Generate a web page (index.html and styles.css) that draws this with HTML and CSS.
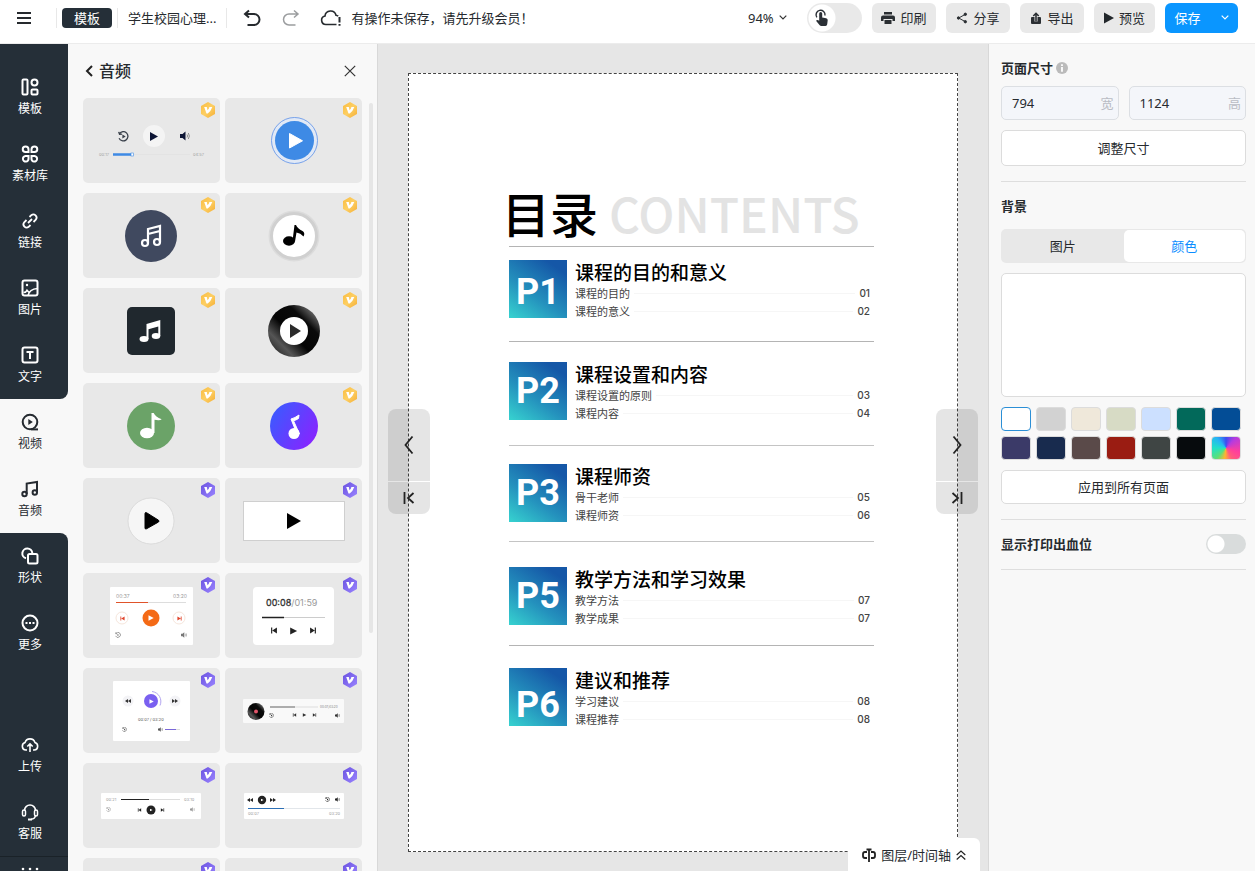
FILE: index.html
```
<!DOCTYPE html>
<html lang="zh-CN">
<head>
<meta charset="utf-8">
<meta name="viewport" content="width=device-width, initial-scale=1">
<title>学生校园心理</title>
<link rel="stylesheet" href="styles.css">
</head>
<body>
<svg class="defs" aria-hidden="true">
  <defs>
    <linearGradient id="gold" x1="0" y1="0" x2="1" y2="1"><stop offset="0" stop-color="#f9bb3f"/><stop offset=".5" stop-color="#fdcf63"/><stop offset="1" stop-color="#f5ae35"/></linearGradient>
    <linearGradient id="violet" x1="0" y1="0" x2="1" y2="1"><stop offset="0" stop-color="#6a52e0"/><stop offset="1" stop-color="#9a84ff"/></linearGradient>
    <linearGradient id="neon" x1="0" y1=".2" x2="1" y2=".8"><stop offset="0" stop-color="#3a5bff"/><stop offset="1" stop-color="#8b22ff"/></linearGradient>
    <linearGradient id="vinyl" x1="0" y1="1" x2="1" y2="0"><stop offset="0" stop-color="#111"/><stop offset=".25" stop-color="#555"/><stop offset=".45" stop-color="#050505"/><stop offset=".7" stop-color="#0a0a0a"/><stop offset=".85" stop-color="#5a5a5a"/><stop offset="1" stop-color="#111"/></linearGradient>
    <symbol id="hex" viewBox="0 0 14 16"><path d="M7 0 14 4V12L7 16 0 12V4Z"/><path d="M3.200 5H5.800L6.500 8.300Q8.200 6.800 8.400 5H11.300Q9.800 9.500 6.700 11.600H5.500Z" fill="#fff"/></symbol>
    <symbol id="prev" viewBox="0 0 6 6"><path d="M.5.5h1v5h-1zM5.500.5v5L1.500 3z"/></symbol>
    <symbol id="next" viewBox="0 0 6 6"><path d="M4.500.5h1v5h-1zM.5.5v5L4.500 3z"/></symbol>
    <symbol id="rew" viewBox="0 0 6 4"><path d="M3 0v4L0 2zM6 0v4L3 2z"/></symbol>
    <symbol id="fwd" viewBox="0 0 6 4"><path d="M0 0v4l3-2zM3 0v4l3-2z"/></symbol>
    <symbol id="tri" viewBox="0 0 6 6"><path d="M.5.3v5.400L5.700 3z"/></symbol>
    <symbol id="vol" viewBox="0 0 10 10"><path d="M0 3h2.500L5.500.5v9L2.500 7H0z"/><path d="M7 3.500q1.200 1.500 0 3M8.300 2q2.200 3 0 6" fill="none" stroke="currentColor" stroke-width=".8"/></symbol>
    <symbol id="loop" viewBox="0 0 10 10"><path d="M1.500 2.200A4.200 4.200 0 1 1 1 6.500M.6.8l.8 2.200 2.300-.2" fill="none" stroke="currentColor" stroke-width="1.200"/><path d="M4 3.200v3.600L7 5z"/></symbol>
  </defs>
</svg>

<div class="app">
  <header class="topbar">
    <button class="icon-btn menu" aria-label="菜单"><svg width="14" height="12" viewBox="0 0 14 12" stroke="#262a2e" stroke-width="2"><path d="M0 1h14M0 6h14M0 11h14"/></svg></button>
    <div class="doc-name"><span class="doc-kind">模板</span></div>
    <div class="doc-title">学生校园心理...</div>
    <button class="icon-btn" aria-label="撤销"><svg width="18" height="18" viewBox="0 0 18 18" fill="none" stroke="#262a2e" stroke-width="2"><path d="M6 1.500 2 5l4 3.500M2.300 5H11a5.500 5.500 0 0 1 0 11H4.500"/></svg></button>
    <button class="icon-btn redo" aria-label="重做"><svg width="18" height="18" viewBox="0 0 18 18" fill="none" stroke="#9b9d9f" stroke-width="1.500"><path d="M12 1.500 16 5l-4 3.500M15.700 5H7a5.500 5.500 0 0 0 0 11h6.500"/></svg></button>
    <div class="save-state"><svg width="22" height="18" viewBox="0 0 22 18" fill="none" stroke="#262a2e" stroke-width="1.600"><path d="M16.500 15.500H6a4.300 4.300 0 0 1-1-8.500A5.600 5.600 0 0 1 16 6.200a4 4 0 0 1 2.200 1"/><path d="M19.500 8v5.500M19.500 15v1.800" stroke-width="2"/></svg><span>有操作未保存，请先升级会员！</span></div>

    <div class="actions">
      <label class="zoom"><select aria-label="缩放"><option>94%</option></select><svg width="8" height="5" viewBox="0 0 8 5" fill="none" stroke="#333" stroke-width="1.200"><path d="M.7.7 4 4 7.300.7"/></svg></label>
      <label class="touch"><input type="checkbox" aria-label="触控模式"><svg width="16" height="18" viewBox="0 0 16 18"><path d="M2.800 8.300A4.500 4.500 0 1 1 11 6.500" fill="none" stroke="#2b3036" stroke-width="1.400"/><path d="M5.200 4.500a1.500 1.500 0 0 1 3 0v4l4 .8q1.600.4 1.500 2l-.5 4q-.2 1.700-1.700 1.700H7.300q-1 0-1.600-.8L2 11.800q1.300-1.400 3.200 0z" fill="#2b3036"/></svg></label>
      <button class="btn"><svg width="14" height="14" viewBox="0 0 14 14" fill="#2b2f33"><path d="M3 1h8v2.500H3z"/><path fill-rule="evenodd" d="M2 4.500h10q2 0 2 2V10h-2.500V8h-9v2H0V6.500q0-2 2-2z"/><path d="M3.500 9h7v4h-7z"/></svg>印刷</button>
      <button class="btn"><svg width="12" height="12" viewBox="0 0 12 12" fill="#2b2f33" stroke="#2b2f33"><path d="M9 2.500 2.700 6 9 9.500" fill="none"/><circle cx="9.300" cy="2.300" r="1.200"/><circle cx="2.500" cy="6" r="1.200"/><circle cx="9.300" cy="9.700" r="1.200"/></svg>分享</button>
      <button class="btn"><svg width="12" height="12" viewBox="0 0 12 12"><path d="M2 5h8q1 0 1 1v5q0 1-1 1H2q-1 0-1-1V6q0-1 1-1z" fill="#2b2f33"/><path d="M6 9.500V4" stroke="#e9e9e9" stroke-width="3"/><path d="M6 9.500V2M3.300 4 6 1.300 8.700 4" stroke="#2b2f33" stroke-width="1.600" fill="none"/></svg>导出</button>
      <button class="btn btn-play"><svg width="10" height="12" viewBox="0 0 10 12" fill="#22272b"><path d="M0 .5v11L10 6z"/></svg>预览</button>
      <button class="btn btn-save">保存<svg width="8" height="5" viewBox="0 0 8 5" fill="none" stroke="#fff" stroke-width="1.200"><path d="M.7.7 4 4 7.300.7"/></svg></button>
    </div>
  </header>

  <nav class="rail">
    <div class="rail-group rail-first">
      <button class="rail-item"><svg width="18" height="18" viewBox="0 0 18 18" class="ic"><rect x="1.500" y="1.500" width="5" height="15" rx="1"/><circle cx="13.500" cy="4.500" r="3"/><rect x="10.500" y="11.500" width="6" height="5" rx="1"/></svg>模板</button>
      <button class="rail-item"><svg width="18" height="18" viewBox="0 0 18 18" class="ic"><path d="M4.500 1.500h0a3 3 0 0 1 3 3v2.500h-3a2.700 2.700 0 0 1 0-5.500zM13.500 1.500a2.700 2.700 0 0 1 0 5.500h-3V4.500a3 3 0 0 1 3-3zM4.500 11h3v2.500a2.800 2.800 0 1 1-3-2.500zM10.500 11h3a2.800 2.800 0 1 1-3 2.500z"/></svg>素材库</button>
      <button class="rail-item"><svg width="18" height="18" viewBox="0 0 18 18" class="ic"><path d="M7 11l4-4M8.500 5l1.800-1.800a3.200 3.200 0 0 1 4.500 4.500L12.500 10M9.500 13l-1.800 1.800a3.200 3.200 0 0 1-4.500-4.500L5.500 8" stroke-width="1.800"/></svg>链接</button>
      <button class="rail-item"><svg width="18" height="18" viewBox="0 0 18 18" class="ic"><rect x="1.500" y="1.500" width="15" height="15" rx="2"/><circle cx="6" cy="6" r="1.200" fill="currentColor" stroke="none"/><path d="M2.500 13.500q2.500 0 3.500-2.200L8.500 14M7 16.500q1.500-6.500 9.500-7" stroke-width="1.600"/></svg>图片</button>
      <button class="rail-item"><svg width="18" height="18" viewBox="0 0 18 18" class="ic"><rect x="1.500" y="1.500" width="15" height="15" rx="2"/><path d="M5.500 6h7M9 6v7"/></svg>文字</button>
    </div>
    <div class="rail-group rail-active">
      <button class="rail-item"><svg width="18" height="18" viewBox="0 0 18 18" class="ic"><circle cx="9" cy="9" r="7.300"/><path d="M10 16.400h7"/><path d="M7.300 6v6l4.500-3z" fill="currentColor" stroke="none"/></svg>视频</button>
      <button class="rail-item"><svg width="18" height="18" viewBox="0 0 18 18" class="ic"><circle cx="3.500" cy="14" r="2.200"/><circle cx="13.800" cy="12.500" r="2.200"/><path d="M5.700 14V3.500L16 2v10.500"/></svg>音频</button>
    </div>
    <div class="rail-group rail-last">
      <button class="rail-item"><svg width="18" height="18" viewBox="0 0 18 18" class="ic"><path d="M5 11.300a5 5 0 1 1 6.300-5.300"/><rect x="7" y="7" width="9.500" height="9.500" rx="1.500"/></svg>形状</button>
      <button class="rail-item"><svg width="18" height="18" viewBox="0 0 18 18" class="ic"><circle cx="9" cy="9" r="7.500"/><path d="M4.500 9h2M8 9h2M11.500 9h2"/></svg>更多</button>
      <div class="rail-foot">
        <button class="rail-item"><svg width="18" height="18" viewBox="0 0 18 18" class="ic"><path d="M6 14H4.700a3.800 3.800 0 0 1-.7-7.400 5.200 5.200 0 0 1 10 0 3.800 3.800 0 0 1-.7 7.400H12M9 16V8M6.300 10.500 9 7.800l2.700 2.700" stroke-width="1.600"/></svg>上传</button>
        <button class="rail-item"><svg width="18" height="18" viewBox="0 0 18 18" class="ic"><path d="M3.500 7.500a5.500 5.500 0 0 1 11 0M14.500 12.500q-.5 3.500-4.500 3.800" stroke-width="1.600"/><rect x="1.500" y="7" width="3" height="6" rx="1.500" stroke-width="1.500"/><rect x="13.500" y="7" width="3" height="6" rx="1.500" stroke-width="1.500"/><path d="M7 16.500h4"/></svg>客服</button>
        <button class="rail-dots" aria-label="展开"><svg width="18" height="4" viewBox="0 0 18 4" fill="#fff"><circle cx="2" cy="2" r="1.300"/><circle cx="9" cy="2" r="1.300"/><circle cx="16" cy="2" r="1.300"/></svg></button>
      </div>
    </div>
  </nav>

  <aside class="library">
    <div class="library-head">
      <button class="back"><svg width="8" height="12" viewBox="0 0 8 12" fill="none" stroke="#222" stroke-width="2"><path d="M7 1 2 6l5 5"/></svg>音频</button>
      <button class="icon-btn" aria-label="关闭"><svg width="12" height="12" viewBox="0 0 12 12" stroke="#333" stroke-width="1.200"><path d="M.8.8l10.400 10.400M11.200.8.8 11.200"/></svg></button>
    </div>
    <div class="library-body">
      <div class="cards">
        <button class="card gold"><svg viewBox="0 0 137 85"><g color="#39404a" fill="#39404a"><use href="#loop" x="35" y="33" width="11" height="11"/></g><circle cx="71" cy="38" r="11" fill="#f4f4f4"/><path d="M67 34v9l8-4.500z" fill="#0c1534"/><g color="#777" fill="#0c1534"><use href="#vol" x="97" y="33" width="10" height="10"/></g><text x="16" y="58" font-size="4" fill="#a0a0a0">00:17</text><path d="M50 56.500h57" stroke="#e3e3e3"/><path d="M30 56.500h19" stroke="#3e8ae5" stroke-width="2.500"/><rect x="48" y="55" width="2.500" height="3" fill="#fff" stroke="#3e8ae5" stroke-width=".6"/><text x="110" y="58" font-size="4" fill="#a0a0a0">04:57</text></svg><svg class="badge"><use href="#hex"/></svg></button>
        <button class="card gold"><svg viewBox="0 0 137 85"><circle cx="69.500" cy="42.500" r="23" fill="#e1e9f6" stroke="#5b8fe8" stroke-width=".8"/><circle cx="69.500" cy="42.500" r="19.500" fill="#3e8ae5"/><path d="M64.500 35.500v14.500l13-7.200z" fill="#fff" stroke="#fff" stroke-linejoin="round"/></svg><svg class="badge"><use href="#hex"/></svg></button>
        <button class="card gold"><svg viewBox="0 0 137 85"><circle cx="68" cy="43" r="26" fill="#40495f"/><g fill="none" stroke="#fff" stroke-width="2.200"><circle cx="62" cy="50" r="3"/><circle cx="74" cy="49" r="3"/><path d="M65 50V36l12-3v16M65 41l12-3"/></g></svg><svg class="badge"><use href="#hex"/></svg></button>
        <button class="card gold"><svg viewBox="0 0 137 85"><circle cx="69" cy="43" r="25.500" fill="#dcdcdc"/><circle cx="69" cy="43" r="22.500" fill="#fff" stroke="#d0d0d0" stroke-width="3"/><ellipse cx="64" cy="48" rx="6" ry="4.700"/><path d="M67.500 48 69.500 32h1.500q1.500 3.500 6.500 6 3 2 1 5.500-3-3.500-7-4l-1.500 9z"/></svg><svg class="badge"><use href="#hex"/></svg></button>
        <button class="card gold"><svg viewBox="0 0 137 85"><rect x="44" y="19" width="48" height="48" rx="5" fill="#20282e"/><g fill="#fff"><ellipse cx="61" cy="51" rx="4.500" ry="3"/><ellipse cx="73" cy="48" rx="4.300" ry="3"/><path d="M63.500 51V36L77.300 32v16h-2V38.500l-9.800 2.700V51z"/></g></svg><svg class="badge"><use href="#hex"/></svg></button>
        <button class="card gold"><svg viewBox="0 0 137 85"><circle cx="69" cy="43" r="26" fill="url(#vinyl)"/><circle cx="69" cy="43" r="14" fill="#fff"/><path d="M65 36v14l11-7z" fill="#2b2b2b"/></svg><svg class="badge"><use href="#hex"/></svg></button>
        <button class="card gold"><svg viewBox="0 0 137 85"><circle cx="68" cy="43" r="24" fill="#6ba368"/><ellipse cx="64" cy="50" rx="7" ry="5.300" fill="#fff"/><path d="M68.500 50V30h2.200q1.500 3.800 8 6.300-2 1.500-7.200.4V50z" fill="#fff"/></svg><svg class="badge"><use href="#hex"/></svg></button>
        <button class="card gold"><svg viewBox="0 0 137 85"><circle cx="69" cy="43" r="24" fill="url(#neon)"/><circle cx="69" cy="50.500" r="5.500" fill="#fff"/><path d="M66 36q4-1 8-4l-.5 3.500q-3 2-5 2.200l6 13.300h-2.500z" fill="#fff" stroke="#fff"/></svg><svg class="badge"><use href="#hex"/></svg></button>
        <button class="card violet"><svg viewBox="0 0 137 85"><circle cx="68" cy="43" r="23" fill="#f6f6f6" stroke="#d6d6d6" stroke-width=".8"/><path d="M62 35.500v14.500q0 1.500 1.500.8L75.500 44q1-1 0-1.800L63.500 34.700q-1.500-.5-1.500.8z" stroke="#000"/></svg><svg class="badge"><use href="#hex"/></svg></button>
        <button class="card violet"><svg viewBox="0 0 137 85"><rect x="18.500" y="23.500" width="101" height="39" fill="#fff" stroke="#cfcfcf"/><path d="M62 35v16l14-8z"/></svg><svg class="badge"><use href="#hex"/></svg></button>
        <button class="card violet"><svg viewBox="0 0 137 85"><rect x="27" y="14" width="83" height="58" rx="1" fill="#fff"/><text x="33" y="25" font-size="5" fill="#999">00:37</text><text x="90" y="25" font-size="5" fill="#999">03:20</text><path d="M33 29.500h70" stroke="#ddd"/><path d="M33 29.500h32" stroke="#e0532a"/><circle cx="39" cy="45" r="6" fill="#fff" stroke="#f6e6dc"/><circle cx="68" cy="45" r="8.500" fill="#f46a16"/><circle cx="96" cy="45" r="6" fill="#fff" stroke="#f6e6dc"/><g fill="#e0432a"><use href="#prev" x="37" y="43" width="5" height="5"/><use href="#next" x="94" y="43" width="5" height="5"/></g><use href="#tri" x="65" y="42" width="6" height="6" fill="#fff"/><g color="#777" fill="#777"><use href="#loop" x="32" y="59" width="6" height="6"/><use href="#vol" x="98" y="59" width="6" height="6"/></g></svg><svg class="badge"><use href="#hex"/></svg></button>
        <button class="card violet"><svg viewBox="0 0 137 85"><rect x="28" y="14" width="81" height="58" rx="4" fill="#fff"/><text x="41" y="33" font-size="9" fill="#333" stroke="#333" stroke-width=".3">00:08<tspan fill="#999" stroke="none">/01:59</tspan></text><path d="M37 44.500h63" stroke="#ccc"/><path d="M37 44.500h22" stroke="#222" stroke-width="1.500"/><g fill="#222"><use href="#prev" x="45" y="54" width="8" height="7"/><use href="#tri" x="64" y="54" width="9" height="8"/><use href="#next" x="84" y="54" width="8" height="7"/></g></svg><svg class="badge"><use href="#hex"/></svg></button>
        <button class="card violet"><svg viewBox="0 0 137 85"><rect x="30" y="13" width="77" height="60" rx="1" fill="#fff"/><circle cx="45" cy="33" r="5.500" fill="#f3f3f6"/><circle cx="92" cy="33" r="5.500" fill="#f3f3f6"/><path d="M69 23.500a10 10 0 0 1 8 14" fill="none" stroke="#b3a5f0"/><circle cx="68" cy="33" r="7" fill="#7a60f0"/><use href="#tri" x="66" y="31" width="5" height="5" fill="#fff"/><g fill="#333"><use href="#rew" x="42" y="31" width="6" height="4"/><use href="#fwd" x="89" y="31" width="6" height="4"/></g><text x="55" y="53" font-size="4" fill="#555">00:07 / 03:20</text><g color="#555" fill="#555"><use href="#loop" x="39" y="59" width="5" height="5"/><use href="#vol" x="75" y="59" width="5" height="5"/></g><path d="M82 61.500h15" stroke="#ddd"/><path d="M82 61.500h11" stroke="#7a68d8"/></svg><svg class="badge"><use href="#hex"/></svg></button>
        <button class="card violet"><svg viewBox="0 0 137 85"><rect x="18" y="31" width="101" height="24" rx="1" fill="#f9f9f9"/><circle cx="31" cy="43.500" r="8.500" fill="url(#vinyl)"/><circle cx="31" cy="43.500" r="2" fill="#e0556a"/><path d="M45 39h48" stroke="#ddd"/><path d="M45 39h25" stroke="#999" stroke-width="1.500"/><text x="95" y="40" font-size="3" fill="#777">00:07/03:20</text><g color="#444" fill="#333"><use href="#loop" x="44" y="45" width="5" height="5"/><use href="#prev" x="67" y="45" width="5" height="4"/><use href="#tri" x="77" y="45" width="5" height="4"/><use href="#next" x="87" y="45" width="5" height="4"/><use href="#vol" x="110" y="45" width="5" height="5"/></g></svg><svg class="badge"><use href="#hex"/></svg></button>
        <button class="card violet"><svg viewBox="0 0 137 85"><rect x="18" y="30" width="100" height="26" rx="1" fill="#fff"/><text x="23" y="38" font-size="4" fill="#999">00:21</text><text x="101" y="38" font-size="4" fill="#999">03:10</text><path d="M38 36.500h59" stroke="#ddd"/><path d="M38 36.500h28" stroke="#222"/><circle cx="68" cy="47" r="4.500" fill="#222"/><use href="#tri" x="66.500" y="45.500" width="3.500" height="3" fill="#fff"/><g color="#777" fill="#222"><use href="#prev" x="54" y="45" width="5" height="4"/><use href="#next" x="77" y="45" width="5" height="4"/></g><g color="#999" fill="#999"><use href="#loop" x="23" y="44" width="5" height="5"/><use href="#vol" x="107" y="44" width="5" height="5"/></g></svg><svg class="badge"><use href="#hex"/></svg></button>
        <button class="card violet"><svg viewBox="0 0 137 85"><rect x="19" y="30" width="100" height="26" rx="1" fill="#fff"/><g color="#222" fill="#222"><use href="#rew" x="22" y="35" width="6" height="4"/><circle cx="37" cy="37" r="4.200"/><use href="#fwd" x="45" y="35" width="6" height="4"/><use href="#loop" x="100" y="34" width="5" height="5"/><use href="#vol" x="110" y="34" width="5" height="5"/></g><use href="#tri" x="35.500" y="35.500" width="3.500" height="3" fill="#fff"/><path d="M23 45.500h92" stroke="#e2e6ea"/><path d="M23 45.500h36" stroke="#2b6fb5"/><text x="23" y="52" font-size="4" fill="#999">00:07</text><text x="104" y="52" font-size="4" fill="#999">03:20</text></svg><svg class="badge"><use href="#hex"/></svg></button>
        <button class="card violet"><svg viewBox="0 0 137 85"></svg><svg class="badge"><use href="#hex"/></svg></button>
        <button class="card violet"><svg viewBox="0 0 137 85"></svg><svg class="badge"><use href="#hex"/></svg></button>
      </div>
      <div class="track"></div>
    </div>
  </aside>

  <main class="stage">
    <article class="page">
      <h1 class="cover">目录 <span>CONTENTS</span></h1>
      <section class="chapter">
        <div class="tile">P1</div>
        <div class="chapter-text"><h2>课程的目的和意义</h2>
          <p class="entry"><span>课程的目的</span><i></i><b>01</b></p>
          <p class="entry"><span>课程的意义</span><i></i><b>02</b></p></div>
      </section>
      <section class="chapter tall">
        <div class="tile">P2</div>
        <div class="chapter-text"><h2>课程设置和内容</h2>
          <p class="entry"><span>课程设置的原则</span><i></i><b>03</b></p>
          <p class="entry"><span>课程内容</span><i></i><b>04</b></p></div>
      </section>
      <section class="chapter mid">
        <div class="tile">P3</div>
        <div class="chapter-text"><h2>课程师资</h2>
          <p class="entry"><span>骨干老师</span><i></i><b>05</b></p>
          <p class="entry"><span>课程师资</span><i></i><b>06</b></p></div>
      </section>
      <section class="chapter low">
        <div class="tile">P5</div>
        <div class="chapter-text"><h2>教学方法和学习效果</h2>
          <p class="entry"><span>教学方法</span><i></i><b>07</b></p>
          <p class="entry"><span>教学成果</span><i></i><b>07</b></p></div>
      </section>
      <section class="chapter end">
        <div class="tile">P6</div>
        <div class="chapter-text"><h2>建议和推荐</h2>
          <p class="entry"><span>学习建议</span><i></i><b>08</b></p>
          <p class="entry"><span>课程推荐</span><i></i><b>08</b></p></div>
      </section>
    </article>
    <div class="pager pager-left">
      <button aria-label="上一页"><svg width="10" height="20" viewBox="0 0 10 20" fill="none" stroke="#222" stroke-width="1.800"><path d="M8.500 1.500 1.500 10l7 8.500"/></svg></button>
      <button aria-label="第一页"><svg width="12" height="12" viewBox="0 0 12 12" fill="none" stroke="#222" stroke-width="1.800"><path d="M1.500 0v12M10.500 1 5 6l5.500 5"/></svg></button>
    </div>
    <div class="pager pager-right">
      <button aria-label="下一页"><svg width="10" height="20" viewBox="0 0 10 20" fill="none" stroke="#222" stroke-width="1.800"><path d="M1.500 1.500 8.500 10l-7 8.500"/></svg></button>
      <button aria-label="最后一页"><svg width="12" height="12" viewBox="0 0 12 12" fill="none" stroke="#222" stroke-width="1.800"><path d="M10.500 0v12M1.500 1 7 6l-5.500 5"/></svg></button>
    </div>
    <button class="timeline"><svg width="14" height="14" viewBox="0 0 14 14" fill="none" stroke="#222" stroke-width="1.800"><path d="M5 4H3Q1 4 1 6v2q0 2 2 2h2M9 4h2q2 0 2 2v2q0 2-2 2H9M7 2v12M4.500 1.500h5"/></svg><span>图层/时间轴</span><svg width="10" height="10" viewBox="0 0 10 10" fill="none" stroke="#222" stroke-width="1.200"><path d="M.7 5 5 1l4.300 4M.7 9.500 5 5.500l4.300 4"/></svg></button>
  </main>

  <aside class="props">
    <section>
      <h3>页面尺寸<svg width="12" height="12" viewBox="0 0 12 12"><circle cx="6" cy="6" r="6" fill="#bbb"/><path d="M6 2.300v1.700M6 5v4.700" stroke="#fff" stroke-width="1.800"/></svg></h3>
      <div class="sizes">
        <label class="field"><input type="text" value="794"><span>宽</span></label>
        <label class="field"><input type="text" value="1124"><span>高</span></label>
      </div>
      <button class="wide resize">调整尺寸</button>
    </section>
    <section class="background">
      <h3>背景</h3>
      <div class="tabs"><button>图片</button><button class="on">颜色</button></div>
      <div class="preview"></div>
      <div class="swatches">
        <button class="sw-white" aria-label="白"></button><button class="sw-grey" aria-label="灰"></button><button class="sw-cream" aria-label="米"></button><button class="sw-sage" aria-label="浅绿"></button><button class="sw-sky" aria-label="浅蓝"></button><button class="sw-teal" aria-label="墨绿"></button><button class="sw-blue" aria-label="蓝"></button>
        <button class="sw-indigo" aria-label="靛"></button><button class="sw-navy" aria-label="藏青"></button><button class="sw-brown" aria-label="棕"></button><button class="sw-red" aria-label="红"></button><button class="sw-slate" aria-label="深灰"></button><button class="sw-black" aria-label="黑"></button><button class="sw-wheel" aria-label="自定义"></button>
      </div>
      <button class="wide">应用到所有页面</button>
    </section>
    <section class="bleed">
      <label for="bleed">显示打印出血位</label><input id="bleed" type="checkbox" class="switch">
    </section>
  </aside>
</div>
</body>
</html>
```

FILE: styles.css
```
* { box-sizing: border-box; }
body {
  margin: 0;
  font: 13px/20px "Noto Sans", "Noto Sans CJK SC", sans-serif;
  color: #262a2e;
  background: #f8f8f8;
}
h1, h2, h3, p { margin: 0; }
button, input, select { font: inherit; color: inherit; }
button { border: 0; padding: 0; background: none; cursor: pointer; }
svg { display: block; flex: none; }
.defs { position: absolute; width: 0; height: 0; }

.app {
  display: grid;
  grid-template: 44px minmax(0, 1fr) / 68px 309px minmax(0, 1fr) 266px;
  height: 100vh;
  overflow: hidden;
}

/* Top bar */
.topbar {
  grid-column: 1 / -1;
  display: flex;
  align-items: center;
  padding: 0 17px 8px;
  background: #fff;
  border-bottom: 1px solid #ececec;
  white-space: nowrap;
}
.icon-btn { display: flex; align-items: center; justify-content: center; }
.menu { margin-right: 25px; }
.doc-name { padding: 0 5px; border: solid #e8e8e8; border-width: 0 1px; }
.doc-kind {
  display: block;
  width: 50px;
  border-radius: 4px;
  background: #252f38;
  color: #fff;
  text-align: center;
}
.doc-title { padding: 0 10px; margin-right: 16px; border-right: 1px solid #e8e8e8; }
.redo { margin: 0 20px 0 21px; }
.save-state { display: flex; align-items: center; gap: 9px; }
.actions { display: flex; gap: 10px; margin-left: auto; }
.zoom { display: flex; align-items: center; margin-right: 10px; }
.zoom select { appearance: none; border: 0; background: none; width: 31px; padding: 0; }
.touch { display: grid; align-items: center; }
.touch > * { grid-area: 1 / 1; }
.touch svg { margin-left: 7px; z-index: 1; }
.touch input {
  appearance: none;
  width: 55px;
  height: 30px;
  margin: 0;
  border-radius: 15px;
  background: radial-gradient(circle at 15px 15px, #fff 13px, #e9e9e9 14px);
}
.btn {
  display: flex;
  align-items: center;
  justify-content: center;
  gap: 5px;
  width: 64px;
  height: 30px;
  border-radius: 6px;
  background: #e9e9e9;
}
.btn-play { width: 61px; }
.btn-save { width: 73px; gap: 20px; background: #0a96ff; color: #fff; }

/* Icon rail */
.rail { display: flex; flex-direction: column; min-height: 0; background: #f8f8f8; }
.rail-group { background: #252f38; color: #fff; }
.rail-first { padding-top: 20px; border-radius: 0 0 8px 0; }
.rail-active { background: none; color: #252a30; }
.rail-last {
  display: flex;
  flex: 1;
  flex-direction: column;
  min-height: 0;
  border-radius: 0 8px 0 0;
}
.rail-item {
  display: flex;
  flex-direction: column;
  align-items: center;
  gap: 4px;
  width: 60px;
  height: 67px;
  padding-top: 14px;
  font-size: 12px;
  line-height: 18px;
}
.ic { fill: none; stroke: currentColor; stroke-width: 2; }
.rail-foot { margin-top: auto; }
.rail-dots { display: flex; justify-content: center; width: 100%; height: 15px; padding: 10px 8px 0 0; border-top: 1px solid #1a2228; }

/* Audio library */
.library {
  display: flex;
  flex-direction: column;
  min-height: 0;
  padding: 0 4px 0 15px;
  background: #f8f8f8;
}
.library-head {
  display: flex;
  flex: none;
  align-items: center;
  justify-content: space-between;
  height: 54px;
  padding: 0 17px 0 2px;
}
.back { display: flex; align-items: center; gap: 6px; font-size: 16px; font-weight: 500; }
.library-body { display: flex; flex: 1; gap: 7px; min-height: 0; overflow: hidden; }
.cards { display: grid; flex: 1; grid-template-columns: 1fr 1fr; gap: 10px 5px; align-content: start; }
.card { position: relative; border-radius: 5px; background: #e8e8e8; }
.card > svg:first-child { width: 100%; }
.card text { font-family: Inter, "Noto Sans", sans-serif; }
.badge { position: absolute; top: 4px; right: 5px; width: 14px; height: 16px; }
.gold .badge { fill: url(#gold); }
.violet .badge { fill: url(#violet); }
.track { width: 4px; height: 530px; margin: 5px 0 0; border-radius: 2px; background: #e6e6e6; }

/* Canvas */
.stage {
  position: relative;
  min-height: 0;
  padding: 29px 30px 20px;
  overflow: hidden;
  background: #e6e6e6;
  border: solid #d8d8d8;
  border-width: 0 1px;
}
.page {
  aspect-ratio: 794 / 1124;
  padding: 105px 83px 0 100px;
  background: #fff;
  border: 1px dashed #444;
  color: #000;
  font-family: "Noto Sans CJK SC", sans-serif;
}
.cover {
  display: flex;
  align-items: baseline;
  gap: 11px;
  height: 67px;
  margin-left: -7px;
  font-size: 48px;
  font-weight: 500;
  line-height: 66px;
  white-space: nowrap;
}
.cover span { color: #e3e3e3; }
.chapter {
  display: flex;
  gap: 8px;
  min-height: 95px;
  padding-top: 13px;
  border-top: 1px solid #b4b4b4;
}
.chapter.tall { min-height: 104px; padding-top: 20px; }
.chapter.mid { min-height: 96px; padding-top: 18px; border-color: #c4c4c4; }
.chapter.low { min-height: 104px; padding-top: 25px; border-color: #c4c4c4; }
.chapter.end { padding-top: 22px; }
.tile {
  display: flex;
  align-items: center;
  justify-content: center;
  width: 58px;
  height: 58px;
  background: linear-gradient(215deg, #1557a7 15%, #2491bd 60%, #37d3d0 100%);
  color: #fff;
  font: 700 36px/36px Roboto, sans-serif;
}
.chapter:nth-of-type(1) .tile { padding-top: 6px; }
.end .tile { padding-top: 16px; }
.chapter-text { flex: 1; }
h2 { font-size: 19px; font-weight: 500; line-height: 24px; }
.entry { display: flex; align-items: center; padding-right: 4px; color: #444; font-size: 11px; line-height: 18px; }
.entry i { flex: 1; height: 1px; margin: 0 4px; background: #f6f6f6; }
.entry b { font-family: Inter, sans-serif; font-size: 10px; font-weight: 500; }

.pager { position: absolute; top: 365px; display: grid; gap: 1px; width: 42px; }
.pager-left { left: 10px; }
.pager-right { right: 10px; }
.pager button {
  display: flex;
  align-items: center;
  justify-content: center;
  height: 72px;
  border-radius: 8px 8px 0 0;
  background: rgba(0, 0, 0, .1);
}
.pager button + button { height: 32px; border-radius: 0 0 8px 8px; }
.timeline {
  position: absolute;
  right: 8px;
  bottom: 0;
  display: flex;
  align-items: center;
  gap: 5px;
  height: 33px;
  padding: 0 14px;
  border-radius: 6px 6px 0 0;
  background: #fff;
  white-space: nowrap;
}

/* Properties */
.props { padding: 0 9px 0 12px; background: #f8f8f8; }
.props section { padding: 14px 0 15px; border-bottom: 1px solid #dedede; }
.props h3 { display: flex; align-items: center; gap: 3px; font-size: 13px; font-weight: 700; line-height: 20px; }
.sizes { display: grid; grid-template-columns: repeat(2, minmax(0, 1fr)); gap: 10px; margin: 8px 0 10px; }
.field {
  display: flex;
  align-items: center;
  height: 34px;
  padding: 0 4px 0 10px;
  border: 1px solid #dcdfe3;
  border-radius: 5px;
  background: #f4f6fa;
}
.field input { flex: 1; min-width: 0; border: 0; padding: 0; background: none; }
.field span { color: #b9bcc4; }
.wide { display: block; width: 100%; height: 34px; border: 1px solid #dcdcdc; border-radius: 5px; background: #fff; }
.resize { height: 36px; }
.tabs { display: grid; grid-template-columns: 1fr 1fr; height: 34px; margin: 13px 0 10px; padding: 1px; border-radius: 5px; background: #e8e8e8; }
.tabs .on { border-radius: 5px; background: #fff; color: #0a8dff; }
.preview { height: 124px; border: 1px solid #dcdcdc; border-radius: 5px; background: #fff; }
.swatches { display: grid; grid-template-columns: repeat(7, 30px); grid-auto-rows: 24px; gap: 5px; margin: 10px 0; }
.swatches button { border: 1px solid #dcdcdc; border-radius: 4px; }
.swatches .sw-white { background: #fff; border-color: #2b8fd6; }
.sw-grey { background: #d2d2d2; }
.sw-cream { background: #efe8da; }
.sw-sage { background: #d7dbc5; }
.sw-sky { background: #cce0ff; }
.sw-teal { background: #02695a; }
.sw-blue { background: #034d96; }
.sw-indigo { background: #3b3a68; }
.sw-navy { background: #182b4e; }
.sw-brown { background: #5a4a49; }
.sw-red { background: #9a1c12; }
.sw-slate { background: #3f4544; }
.sw-black { background: #070b0d; }
.sw-wheel { background: conic-gradient(#3a4cf0, #b43be0 12%, #ff3f9c 30%, #ff5c7c 42%, #ffb52e 52%, #5be07a 62%, #22e0c8 75%, #27b4f5 88%, #3a4cf0); }
.props .bleed { display: flex; align-items: center; justify-content: space-between; font-weight: 700; }
.switch {
  appearance: none;
  width: 40px;
  height: 20px;
  margin: 0;
  border-radius: 10px;
  background: radial-gradient(circle at 10px 10px, #fff 8px, #d9dcdc 9px);
}
```
